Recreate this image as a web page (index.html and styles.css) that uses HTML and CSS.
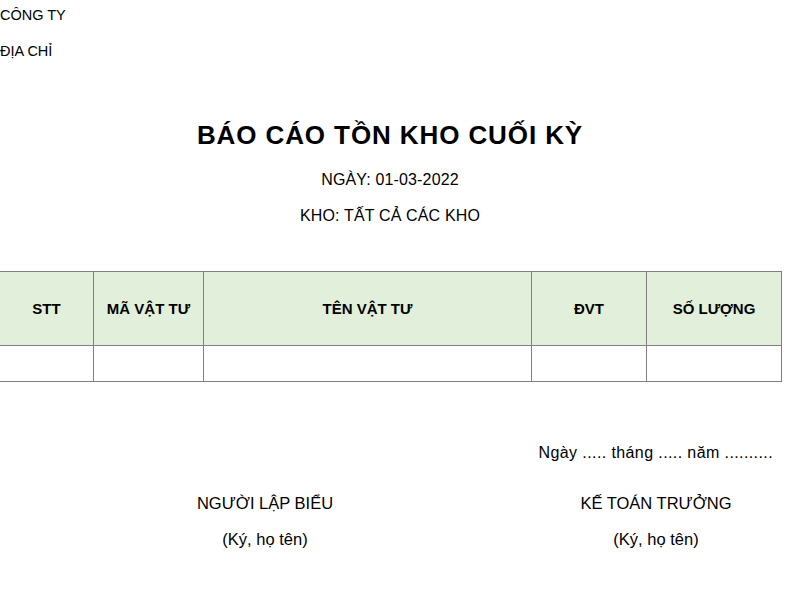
FILE: index.html
```html
<!DOCTYPE html>
<html lang="vi">
<head>
<meta charset="utf-8">
<title>Báo cáo tồn kho cuối kỳ</title>
<link rel="stylesheet" href="styles.css">
</head>
<body>
<div class="page">
  <div class="company">
    <div class="company-line">CÔNG TY</div>
    <div class="company-line">ĐỊA CHỈ</div>
  </div>
  <div class="heading">
    <h1 class="title">BÁO CÁO TỒN KHO CUỐI KỲ</h1>
    <div class="sub">NGÀY: 01-03-2022</div>
    <div class="sub">KHO: TẤT CẢ CÁC KHO</div>
  </div>
  <table class="report">
    <colgroup>
      <col class="c1"><col class="c2"><col class="c3"><col class="c4"><col class="c5">
    </colgroup>
    <thead>
      <tr>
        <th>STT</th>
        <th>MÃ VẬT TƯ</th>
        <th>TÊN VẬT TƯ</th>
        <th>ĐVT</th>
        <th>SỐ LƯỢNG</th>
      </tr>
    </thead>
    <tbody>
      <tr><td></td><td></td><td></td><td></td><td></td></tr>
    </tbody>
  </table>
  <div class="sign">
    <div class="date-line">Ngày ..... tháng ..... năm ..........</div>
    <div class="sign-cols">
      <div class="sign-col">
        <div class="role">NGƯỜI LẬP BIỂU</div>
        <div class="note">(Ký, họ tên)</div>
      </div>
      <div class="sign-col">
        <div class="role">KẾ TOÁN TRƯỞNG</div>
        <div class="note">(Ký, họ tên)</div>
      </div>
    </div>
  </div>
</div>
</body>
</html>
```
FILE: styles.css
```css
html, body {
  margin: 0;
  padding: 0;
  background: #ffffff;
}
body {
  font-family: "Liberation Sans", Arial, sans-serif;
  color: #000000;
}
.page {
  width: 782px;
  margin-left: -1px;
}
.company {
  padding-left: 1px;
  font-size: 14.5px;
  line-height: 18px;
  padding-top: 6px;
}
.company-line {
  height: 36px;
}
.heading {
  text-align: center;
  padding-top: 42px;
}
.title {
  margin: 0;
  font-size: 26px;
  font-weight: bold;
  letter-spacing: 0.9px;
  line-height: 30px;
  height: 50px;
}
.sub {
  font-size: 16px;
  line-height: 20px;
  letter-spacing: 0.15px;
  height: 36px;
}
.report {
  margin-top: 29px;
  border-collapse: collapse;
  width: 782px;
  table-layout: fixed;
}
.c1 { width: 94px; }
.c2 { width: 110px; }
.c3 { width: 328px; }
.c4 { width: 115px; }
.c5 { width: 135px; }
.report th, .report td {
  border: 1px solid #808080;
  padding: 0;
  text-align: center;
}
.report th {
  background: #e2efda;
  font-size: 15px;
  font-weight: bold;
  height: 73px;
}
.report td {
  height: 35px;
}
.sign {
  padding-top: 61px;
}
.date-line {
  text-align: right;
  padding-right: 8px;
  font-size: 16px;
  letter-spacing: 0.4px;
  line-height: 20px;
}
.sign-cols {
  display: grid;
  grid-template-columns: 532px 250px;
  padding-top: 30px;
  text-align: center;
}
.role {
  font-size: 16.5px;
  line-height: 20px;
  height: 36px;
}
.note {
  font-size: 16.5px;
  line-height: 20px;
}
```
